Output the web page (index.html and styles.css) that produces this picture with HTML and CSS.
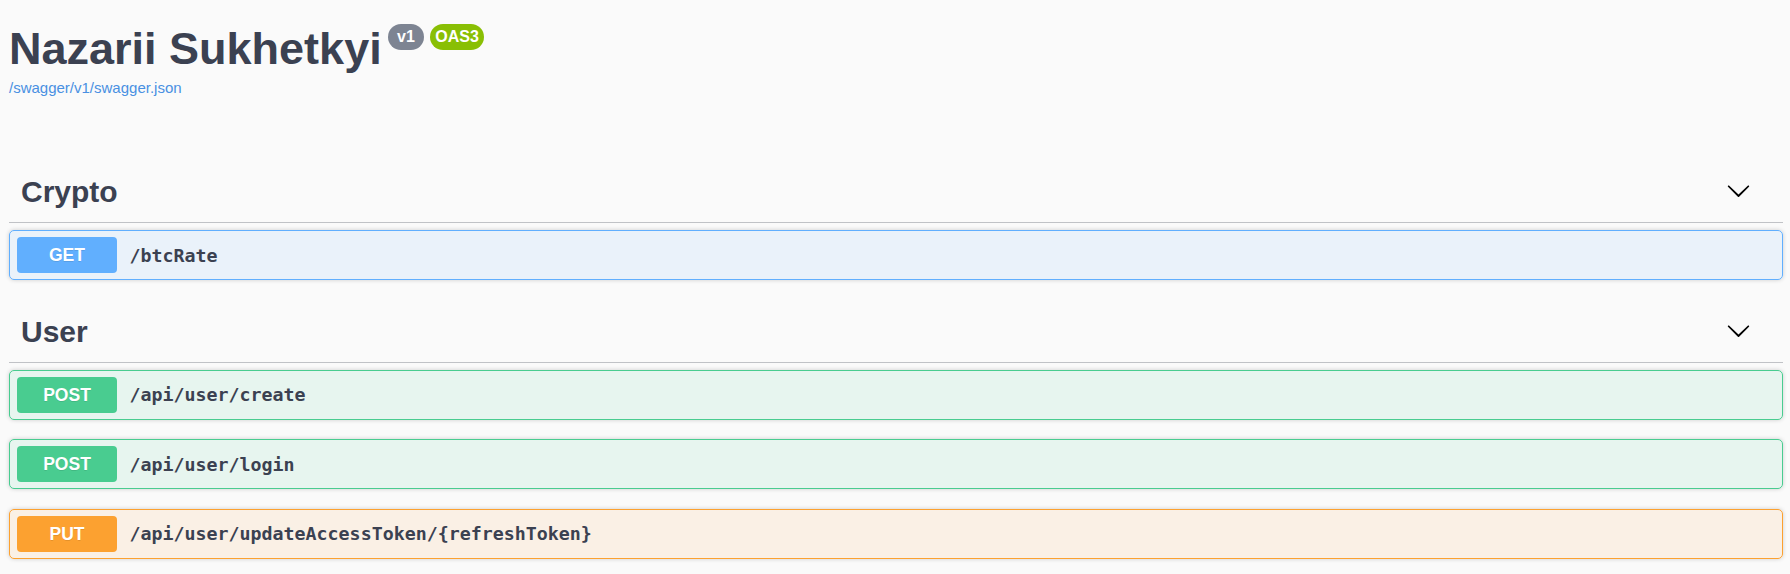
FILE: index.html
```html
<!DOCTYPE html>
<html lang="en">
<head>
<meta charset="utf-8">
<title>Nazarii Sukhetkyi</title>
<link rel="stylesheet" href="styles.css">
</head>
<body>
<div class="page">
  <div class="info">
    <div class="title-row">
      <h2 class="title">Nazarii Sukhetkyi</h2>
      <span class="stamp stamp-version"> v1 </span>
      <span class="stamp stamp-oas">OAS3</span>
    </div>
    <div class="link-row"><a class="spec-link" href="#">/swagger/v1/swagger.json</a></div>
  </div>

  <section class="tag-section">
    <h3 class="tag">
      <span class="tag-name">Crypto</span>
      <span class="expand"><svg width="25" height="25" viewBox="0 0 20 20"><path d="M17.418 6.109c.272-.268.709-.268.979 0s.271.701 0 .969l-7.908 7.830c-.27.268-.707.268-.979 0l-7.908-7.830c-.27-.268-.27-.701 0-.969.271-.268.709-.268.979 0L10 13.250l7.418-7.141z"/></svg></span>
    </h3>
    <div class="opblock get">
      <span class="method">GET</span>
      <span class="path">/btcRate</span>
    </div>
  </section>

  <section class="tag-section">
    <h3 class="tag">
      <span class="tag-name">User</span>
      <span class="expand"><svg width="25" height="25" viewBox="0 0 20 20"><path d="M17.418 6.109c.272-.268.709-.268.979 0s.271.701 0 .969l-7.908 7.830c-.27.268-.707.268-.979 0l-7.908-7.830c-.27-.268-.27-.701 0-.969.271-.268.709-.268.979 0L10 13.250l7.418-7.141z"/></svg></span>
    </h3>
    <div class="opblock post">
      <span class="method">POST</span>
      <span class="path">/api/user/create</span>
    </div>
    <div class="opblock post">
      <span class="method">POST</span>
      <span class="path">/api/user/login</span>
    </div>
    <div class="opblock put">
      <span class="method">PUT</span>
      <span class="path">/api/user/updateAccessToken/{refreshToken}</span>
    </div>
  </section>
</div>
</body>
</html>
```

FILE: styles.css
```css
html, body {
  margin: 0;
  padding: 0;
  background: #fafafa;
}

body {
  font-family: "Liberation Sans", Arial, sans-serif;
  color: #3b4151;
}

.page {
  padding: 0 7px 0 9px;
}

.info {
  padding-top: 23px;
}

.title-row {
  display: flex;
  align-items: flex-start;
}

.title {
  margin: 0;
  font-size: 45px;
  line-height: 52px;
  font-weight: 700;
  color: #3b4151;
}

.stamp {
  margin-top: 1px;
  margin-left: 6px;
  height: 26px;
  line-height: 26px;
  padding: 0 5px;
  border-radius: 13px;
  font-size: 16px;
  font-weight: 700;
  color: #fff;
  white-space: pre;
}

.stamp-version {
  background: #7d8492;
}

.stamp-oas {
  background: #89bf04;
}

.link-row {
  margin-top: 4px;
  line-height: 18px;
}

.spec-link {
  font-size: 15px;
  color: #4990e2;
  text-decoration: none;
}

.tag-section:first-of-type {
  margin-top: 63px;
}

.tag {
  margin: 0 0 7px;
  height: 60px;
  display: flex;
  align-items: center;
  justify-content: space-between;
  padding: 2px 32px 0 12px;
  border-bottom: 1px solid rgba(59, 65, 81, 0.3);
  font-size: 30px;
  font-weight: 700;
  color: #3b4151;
}

.expand {
  display: flex;
  width: 25px;
  height: 25px;
  margin-top: -3px;
}

.expand svg {
  fill: #000;
}

.opblock {
  display: flex;
  align-items: center;
  padding: 6px 7px;
  margin-bottom: 19.5px;
  border: 1px solid;
  border-radius: 5px;
  box-shadow: 0 0 4px rgba(0, 0, 0, 0.19);
}

.method {
  width: 100px;
  height: 36px;
  line-height: 36px;
  text-align: center;
  border-radius: 4px;
  font-size: 17.5px;
  font-weight: 700;
  color: #fff;
  text-shadow: 0 1px 0 rgba(0, 0, 0, 0.1);
}

.path {
  padding: 0 12.5px;
  font-family: "DejaVu Sans Mono", "Liberation Mono", monospace;
  font-size: 18.3px;
  font-weight: 700;
  color: #3b4151;
}

.get {
  background: rgba(97, 175, 254, 0.1);
  border-color: #61affe;
}
.get .method {
  background: #61affe;
}

.post {
  background: rgba(73, 204, 144, 0.1);
  border-color: #49cc90;
}
.post .method {
  background: #49cc90;
}

.put {
  background: rgba(252, 161, 48, 0.1);
  border-color: #fca130;
}
.put .method {
  background: #fca130;
}
```
